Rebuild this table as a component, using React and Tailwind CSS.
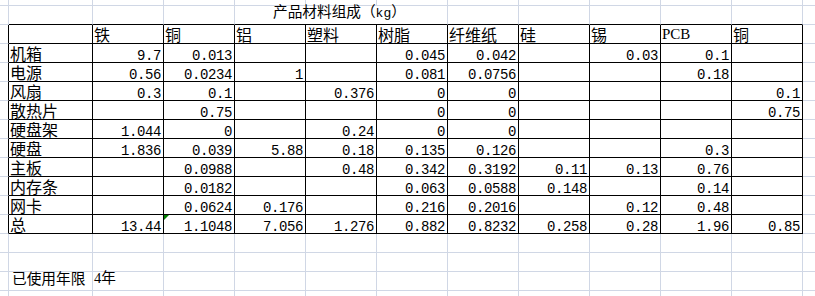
import React from 'react';
import clsx from 'clsx';

const mono = "font-['Liberation_Mono','Noto_Sans_CJK_SC',monospace] text-[14px] tracking-[-0.4px] leading-[12px]";
const cjk = "font-['Noto_Sans_CJK_SC','Liberation_Sans',sans-serif] text-[16px] leading-[18px]";

const headers = ['铁', '铜', '铝', '塑料', '树脂', '纤维纸', '硅', '锡', 'PCB', '铜'];

const data = [
  ['机箱', ['9.7', '0.013', '', '', '0.045', '0.042', '', '0.03', '0.1', '']],
  ['电源', ['0.56', '0.0234', '1', '', '0.081', '0.0756', '', '', '0.18', '']],
  ['风扇', ['0.3', '0.1', '', '0.376', '0', '0', '', '', '', '0.1']],
  ['散热片', ['', '0.75', '', '', '0', '0', '', '', '', '0.75']],
  ['硬盘架', ['1.044', '0', '', '0.24', '0', '0', '', '', '', '']],
  ['硬盘', ['1.836', '0.039', '5.88', '0.18', '0.135', '0.126', '', '', '0.3', '']],
  ['主板', ['', '0.0988', '', '0.48', '0.342', '0.3192', '0.11', '0.13', '0.76', '']],
  ['内存条', ['', '0.0182', '', '', '0.063', '0.0588', '0.148', '', '0.14', '']],
  ['网卡', ['', '0.0624', '0.176', '', '0.216', '0.2016', '', '0.12', '0.48', '']],
  ['总', ['13.44', '1.1048', '7.056', '1.276', '0.882', '0.8232', '0.258', '0.28', '1.96', '0.85']],
];

// r: 0..16 sheet rows, c: 0..12 sheet columns (0 and 12 are cut off at the edges)
function Cell({ r, c, wide, className, children }) {
  const blackRight = r >= 2 && r <= 12 && c <= 11;
  const blackBottom = r >= 1 && r <= 12 && c >= 1 && c <= 11;
  return (
    <div
      className={clsx(
        'relative flex min-w-0 whitespace-nowrap text-black',
        c !== 12 && 'border-r',
        r !== 16 && 'border-b',
        blackRight ? 'border-r-black' : 'border-r-[#d0d7e5]',
        blackBottom ? 'border-b-black' : 'border-b-[#d0d7e5]',
        wide && 'col-span-3',
        className
      )}
    >
      {children}
    </div>
  );
}

function Num({ r, c, value, flag }) {
  return (
    <Cell r={r} c={c} className="items-end justify-end pr-[2px]">
      {flag && (
        <svg width="5" height="5" className="absolute left-0 top-0">
          <polygon points="0,0 5,0 0,5" fill="#008000" />
        </svg>
      )}
      <span className={mono}>{value}</span>
    </Cell>
  );
}

function SheetRow({ r }) {
  const cells = [];

  if (r === 1) {
    for (let c = 0; c <= 3; c++) cells.push(<Cell key={c} r={r} c={c} />);
    cells.push(
      <Cell key="title" r={r} c={4} wide className="items-end pb-[3px] pl-[38px]">
        <span className="font-['Noto_Sans_CJK_SC',sans-serif] text-[14.67px] leading-[14px]">
          产品材料组成（<span className="font-['Liberation_Mono',monospace] text-[13px]">kg</span>）
        </span>
      </Cell>
    );
    for (let c = 7; c <= 12; c++) cells.push(<Cell key={c} r={r} c={c} />);
    return cells;
  }

  for (let c = 0; c <= 12; c++) {
    if (r === 2 && c >= 2 && c <= 11) {
      const h = headers[c - 2];
      cells.push(
        <Cell key={c} r={r} c={c} className={clsx('pl-px', h === 'PCB' ? 'items-end pb-[2px]' : 'items-end')}>
          <span className={h === 'PCB' ? "font-['Liberation_Serif',serif] text-[15px] leading-[14px]" : cjk}>{h}</span>
        </Cell>
      );
    } else if (r >= 3 && r <= 12 && c === 1) {
      cells.push(
        <Cell key={c} r={r} c={c} className="items-end pl-px">
          <span className={cjk}>{data[r - 3][0]}</span>
        </Cell>
      );
    } else if (r >= 3 && r <= 12 && c >= 2 && c <= 11) {
      cells.push(<Num key={c} r={r} c={c} value={data[r - 3][1][c - 2]} flag={r === 12 && c === 3} />);
    } else if (r === 15 && c === 1) {
      cells.push(
        <Cell key={c} r={r} c={c} className="items-end pb-[5px] pl-[3px]">
          <span className="font-['Noto_Sans_CJK_SC',sans-serif] text-[14.67px] leading-[14px]">已使用年限</span>
        </Cell>
      );
    } else if (r === 15 && c === 2) {
      cells.push(
        <Cell key={c} r={r} c={c} className="items-end pb-[5px] pl-px">
          <span className="font-['Liberation_Serif','Noto_Sans_CJK_SC',serif] text-[14.67px] leading-[14px]">
            4<span className="font-['Noto_Sans_CJK_SC',sans-serif]">年</span>
          </span>
        </Cell>
      );
    } else {
      cells.push(<Cell key={c} r={r} c={c} />);
    }
  }
  return cells;
}

export default function App() {
  const rows = Array.from({ length: 17 }, (_, r) => r);
  return (
    <div className="grid h-[296px] w-[815px] grid-cols-[9px_84px_repeat(10,71px)_12px] grid-rows-[6px_repeat(15,19px)_5px] overflow-hidden bg-white">
      {rows.map((r) => (
        <React.Fragment key={r}>
          <SheetRow r={r} />
        </React.Fragment>
      ))}
    </div>
  );
}
